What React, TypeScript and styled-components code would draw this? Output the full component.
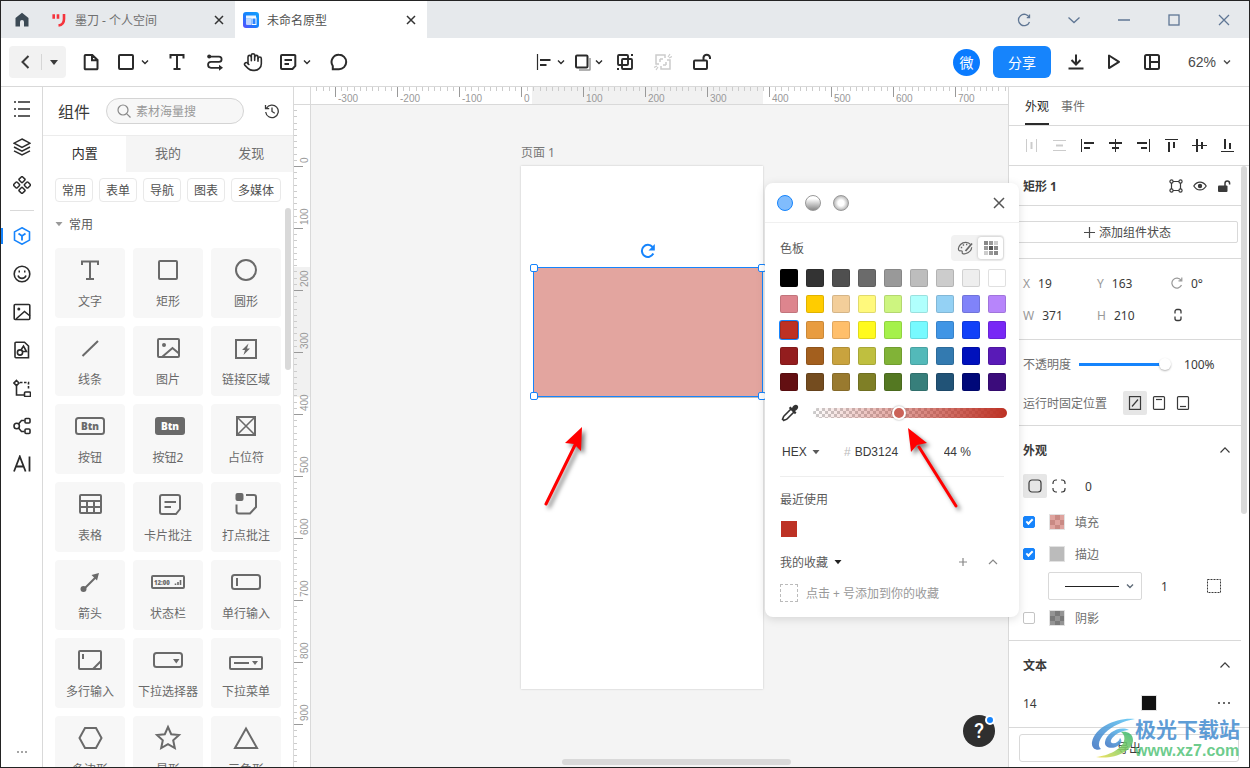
import React from "react";
import styled, { createGlobalStyle, css } from "styled-components";
import { Hand } from "lucide-react";

const blue = "#1684fc";
const line = "#d9d9d9";
const ink = "#3a3a3a";
const muted = "#6e6e6e";

const GlobalStyle = createGlobalStyle`
  *, *::before, *::after { box-sizing: border-box; }
  body { margin: 0; background: #ffffff; }
  body, button, input, select {
    font-family: "Noto Sans", "Noto Sans CJK SC", sans-serif;
    font-size: 12px;
    color: ${ink};
  }
  button, input, select { margin: 0; padding: 0; border: 0; background: none; outline: 0; }
  h1, h2, h3, p { margin: 0; font-size: 12px; font-weight: 400; }
`;

/* ---------- shared parts ---------- */

const Svg = styled.svg<{ $w?: number }>`
  display: block;
  flex: none;
  fill: none;
  stroke: currentColor;
  stroke-width: ${(p) => p.$w ?? 2};
`;

type IconProps = { size?: number; height?: number; w?: number; children: React.ReactNode };
const Icon = ({ size = 18, height, w, children }: IconProps) => (
  <Svg width={size} height={height ?? size} viewBox={`0 0 ${size} ${height ?? size}`} $w={w} aria-hidden="true">
    {children}
  </Svg>
);

const Chevron = () => (
  <Icon size={8} w={1.4}><path d="M1 2.5l3 3 3-3" /></Icon>
);
const ChevronUp = () => (
  <Icon size={12} w={1.2}><path d="M1.5 8.5L6 3.8l4.5 4.7" /></Icon>
);
const CaretDown = () => (
  <Icon size={8} w={0}><path d="M0.500 2h7L4 6.300z" fill="currentColor" /></Icon>
);
const CloseIcon = ({ size = 16, w = 1.5, pad = 4 }: { size?: number; w?: number; pad?: number }) => (
  <Icon size={size} w={w}>
    <path d={`M${pad} ${pad}L${size - pad} ${size - pad}M${size - pad} ${pad}L${pad} ${size - pad}`} />
  </Icon>
);

const Window = styled.div`
  display: flex;
  flex-direction: column;
  height: 100vh;
  border: 1px solid #232323;
  background: #ffffff;
  overflow: hidden;
`;

/* ---------- title bar ---------- */

const TitleBar = styled.header`
  display: flex;
  flex: none;
  height: 37px;
  background: #e6e9ec;
`;
const HomeButton = styled.button`
  display: grid;
  place-items: center;
  width: 42px;
  color: #3c4a55;
`;
const DocTab = styled.div<{ $active?: boolean }>`
  display: flex;
  align-items: center;
  gap: 8px;
  width: 192px;
  padding: 0 8px;
  color: ${(p) => (p.$active ? "#505050" : "#707070")};
  background: ${(p) => (p.$active ? "#ffffff" : "transparent")};
  span { flex: 1; padding-top: 1px; }
  button { color: #333333; }
`;
const WindowControls = styled.div`
  display: flex;
  margin-left: auto;
  button {
    display: grid;
    place-items: center;
    width: 50px;
    color: #5f7694;
  }
`;

/* ---------- toolbar ---------- */

const Toolbar = styled.div`
  display: grid;
  grid-template-columns: 1fr auto 1fr;
  align-items: center;
  flex: none;
  height: 49px;
  border-bottom: 1px solid ${line};
`;
const ToolGroup = styled.div<{ $end?: boolean }>`
  display: flex;
  align-items: center;
  justify-content: ${(p) => (p.$end ? "flex-end" : "flex-start")};
`;
const BackGroup = styled.div`
  display: flex;
  align-items: center;
  height: 32px;
  margin: 0 6px 0 8px;
  border-radius: 4px;
  background: #f2f2f2;
  button { display: grid; place-items: center; height: 16px; }
  button:first-child { width: 33px; border-right: 1px solid #d6d6d6; }
  button:last-child { width: 24px; }
`;
const Tool = styled.button<{ $off?: boolean }>`
  display: grid;
  place-items: center;
  width: 38px;
  height: 32px;
  color: ${(p) => (p.$off ? "#cccccc" : "#2b2b2b")};
`;
const SplitTool = styled.button<{ $tight?: boolean }>`
  display: flex;
  align-items: center;
  gap: ${(p) => (p.$tight ? 3 : 6)}px;
  width: ${(p) => (p.$tight ? 38 : 48)}px;
  height: 32px;
  padding-left: ${(p) => (p.$tight ? 6 : 7)}px;
  color: #2b2b2b;
`;
const Avatar = styled.span`
  display: grid;
  place-items: center;
  width: 27px;
  height: 27px;
  margin-right: 13px;
  border-radius: 50%;
  background: #0a7bff;
  color: #ffffff;
  font-size: 14px;
`;
const ShareButton = styled.button`
  width: 58px;
  height: 32px;
  margin-right: 6px;
  border-radius: 6px;
  background: ${blue};
  color: #ffffff;
  font-size: 14px;
`;
const ZoomButton = styled.button`
  display: flex;
  align-items: center;
  gap: 7px;
  margin: 0 18px 0 17px;
  font-family: "Liberation Sans", sans-serif;
  font-size: 14px;
  color: #4a4a4a;
`;

/* ---------- body ---------- */

const Body = styled.div`
  position: relative;
  display: flex;
  flex: 1;
  min-height: 0;
`;
const Rail = styled.nav`
  display: flex;
  flex-direction: column;
  align-items: center;
  flex: none;
  width: 42px;
  padding: 3px 0;
  border-right: 1px solid ${line};
`;
const RailItem = styled.button<{ $active?: boolean }>`
  display: grid;
  place-items: center;
  flex: none;
  width: 100%;
  height: 38px;
  color: ${(p) => (p.$active ? blue : "#2b2b2b")};
  ${(p) => p.$active && css`
    background: linear-gradient(${blue}, ${blue}) left center / 2px 16px no-repeat;
  `}
`;
const RailRule = styled.hr`
  width: 24px;
  height: 1px;
  flex: none;
  margin: 6px 0;
  border: 0;
  background: ${line};
`;
const RailMore = styled(RailItem)`
  margin-top: auto;
  height: 24px;
  color: #888888;
`;

const Library = styled.aside`
  display: flex;
  flex-direction: column;
  flex: none;
  width: 251px;
  border-right: 1px solid ${line};
`;
const LibraryHead = styled.div`
  display: flex;
  align-items: center;
  height: 49px;
  padding: 0 13px 0 15px;
  border-bottom: 1px solid #ececec;
  h1 { font-size: 16px; flex: none; width: 48px; }
  > button { margin-left: auto; color: ${ink}; }
`;
const SearchBox = styled.label`
  display: flex;
  align-items: center;
  gap: 5px;
  width: 138px;
  height: 26px;
  padding: 0 10px;
  border: 1px solid #d4d4d4;
  border-radius: 13px;
  background: #f7f7f7;
  color: #888888;
  input { width: 100%; min-width: 0; }
  input::placeholder { color: #999999; opacity: 1; }
`;
const LibraryTabs = styled.div`
  display: grid;
  grid-template-columns: repeat(3, 1fr);
  height: 36px;
  flex: none;
`;
const LibraryTab = styled.button<{ $active?: boolean }>`
  padding-bottom: 3px;
  font-size: 13px;
  color: ${(p) => (p.$active ? "#2b2b2b" : muted)};
  background: ${(p) => (p.$active ? "#ffffff" : "#f5f5f5")};
`;
const Chips = styled.div`
  display: flex;
  gap: 6px;
  flex: none;
  padding: 6px 12px 0;
`;
const Chip = styled.button<{ $wide?: boolean }>`
  width: ${(p) => (p.$wide ? 50 : 38)}px;
  height: 24px;
  border: 1px solid #e9e9e9;
  border-radius: 4px;
  color: #505050;
`;
const LibraryScroll = styled.div`
  position: relative;
  flex: 1;
  min-height: 0;
  overflow: hidden;
  padding: 12px 12px 0;
`;
const GroupTitle = styled.button`
  display: flex;
  align-items: center;
  gap: 6px;
  height: 20px;
  color: #5a5a5a;
  svg { color: #999999; }
`;
const CardGrid = styled.div`
  display: grid;
  grid-template-columns: repeat(3, 70px);
  gap: 8px;
  margin-top: 14px;
`;
const Card = styled.button`
  display: flex;
  flex-direction: column;
  align-items: center;
  height: 70px;
  border-radius: 4px;
  background: #f7f7f7;
  color: #6a6a6a;
  white-space: nowrap;
  > svg { margin: 5px 0 6px; }
  span { line-height: 18px; }
`;
const VThumb = styled.i<{ $top: number; $h: number }>`
  position: absolute;
  right: 2px;
  top: ${(p) => p.$top}px;
  width: 6px;
  height: ${(p) => p.$h}px;
  border-radius: 3px;
  background: #d9d9d9;
`;

/* ---------- workspace ---------- */

const Workspace = styled.main`
  position: relative;
  display: grid;
  grid-template: 18px minmax(0, 1fr) / 17px minmax(0, 1fr);
  flex: 1;
  min-width: 0;
  background: #f4f4f4;
`;
const RulerCell = styled.div<{ $side: "corner" | "top" | "left" }>`
  overflow: hidden;
  background: #ffffff;
  border-right: ${(p) => (p.$side === "top" ? 0 : 1)}px solid ${line};
  border-bottom: ${(p) => (p.$side === "left" ? 0 : 1)}px solid ${line};
  svg { display: block; }
  text { font-family: "Liberation Sans", sans-serif; font-size: 10px; fill: #999999; }
`;
const Canvas = styled.div`
  position: relative;
  overflow: hidden;
`;
const PageLabel = styled.span`
  position: absolute;
  left: 210px;
  top: 39px;
  line-height: 18px;
  color: #777777;
`;
const Artboard = styled.div`
  position: absolute;
  left: 210px;
  top: 61px;
  width: 242px;
  height: 523px;
  background: #ffffff;
  box-shadow: 0 0 2px rgba(0, 0, 0, 0.2);
`;
const Shape = styled.div`
  position: absolute;
  left: 12px;
  top: 101px;
  width: 230px;
  height: 130px;
  border: 1px solid ${blue};
  background: #e3a59f;
  box-shadow: 0 1px 0 #bbbbbb;
`;
const Handle = styled.i<{ $x: number; $y: number }>`
  position: absolute;
  left: calc(${(p) => p.$x}% - 4px);
  top: calc(${(p) => p.$y}% - 4px);
  width: 8px;
  height: 8px;
  border: 1px solid ${blue};
  border-radius: 2px;
  background: #ffffff;
`;
const RotateHandle = styled.span`
  position: absolute;
  left: calc(50% - 8px);
  top: -25px;
  color: ${blue};
`;
const HThumb = styled.i`
  position: absolute;
  left: 251px;
  bottom: 2px;
  width: 229px;
  height: 6px;
  border-radius: 3px;
  background: #d9d9d9;
`;
const HelpButton = styled.button`
  position: absolute;
  right: 13px;
  bottom: 20px;
  width: 32px;
  height: 32px;
  border-radius: 50%;
  background: #2f2f2f;
  color: #ffffff;
  font-family: Roboto, sans-serif;
  font-size: 20px;
  font-weight: 500;
  &::after {
    content: "";
    position: absolute;
    right: 0;
    top: 0;
    width: 10px;
    height: 10px;
    border: 2px solid #ffffff;
    border-radius: 50%;
    background: ${blue};
  }
`;

/* ---------- inspector ---------- */

const Inspector = styled.aside`
  position: relative;
  display: flex;
  flex-direction: column;
  flex: none;
  width: 241px;
  border-left: 1px solid ${line};
  background: #ffffff;
`;
const InspectorTabs = styled.div`
  display: flex;
  gap: 12px;
  flex: none;
  height: 39px;
  padding: 0 16px;
  border-bottom: 1px solid ${line};
`;
const InspectorTab = styled.button<{ $active?: boolean }>`
  height: 38px;
  border-top: 1px solid transparent;
  border-bottom: 2px solid ${(p) => (p.$active ? "#2b2b2b" : "transparent")};
  color: ${(p) => (p.$active ? "#2b2b2b" : muted)};
`;
const AlignBar = styled.div`
  display: grid;
  grid-template-columns: repeat(8, 1fr);
  flex: none;
  height: 40px;
  padding: 0 8px;
  border-bottom: 1px solid ${line};
`;
const AlignButton = styled.button<{ $off?: boolean }>`
  display: grid;
  place-items: center;
  color: ${(p) => (p.$off ? "#cccccc" : "#2b2b2b")};
`;
const InspectorScroll = styled.div`
  position: relative;
  flex: 1;
  min-height: 0;
  overflow: hidden;
`;
const Block = styled.section<{ $pad?: string; $last?: boolean }>`
  margin-right: 8px;
  padding: ${(p) => p.$pad ?? "0"};
  border-bottom: ${(p) => (p.$last ? 0 : 1)}px solid ${line};
`;
const Row = styled.div<{ $h: number; $gap?: number }>`
  display: flex;
  align-items: center;
  gap: ${(p) => p.$gap ?? 0}px;
  height: ${(p) => p.$h}px;
  h2 { font-weight: 700; flex: 1; }
  > button { display: grid; place-items: center; }
`;
const HeadRow = styled(Row)`
  padding-right: 10px;
`;
const StateButton = styled.button`
  display: flex;
  align-items: center;
  justify-content: center;
  gap: 4px;
  width: 100%;
  height: 22px;
  border: 1px solid ${line};
  border-radius: 2px;
  color: #4a4a4a;
`;
const FieldGrid = styled.div`
  display: grid;
  grid-template-columns: 74px 74px 1fr;
  grid-auto-rows: 32px;
  align-items: center;
`;
const Field = styled.label`
  display: flex;
  align-items: center;
  gap: 8px;
  color: #999999;
  input { width: 40px; }
`;
const FieldLabel = styled.label`
  flex: none;
  color: ${muted};
`;
const PinLabel = styled.span`
  flex: none;
  margin-right: 16px;
  color: ${muted};
`;
const OpacityRange = styled.input`
  appearance: none;
  width: 92px;
  height: 12px;
  margin: 0 13px 0 8px;
  background: linear-gradient(${blue}, ${blue}) left center / 84px 3px no-repeat;
  &::-webkit-slider-thumb {
    appearance: none;
    width: 12px;
    height: 12px;
    border-radius: 50%;
    background: #ffffff;
    box-shadow: 0 1px 2px rgba(0, 0, 0, 0.3);
  }
`;
const Toggle = styled.button<{ $on?: boolean }>`
  display: grid;
  place-items: center;
  width: 24px;
  height: 24px;
  border-radius: 2px;
  background: ${(p) => (p.$on ? "#e6e6e6" : "transparent")};
`;
const RadiusRow = styled(Row)`
  margin-bottom: 8px;
  input { margin-left: 14px; width: 40px; }
`;
const Check = styled.input`
  appearance: none;
  display: grid;
  place-items: center;
  width: 12px;
  height: 12px;
  border: 1px solid #c4c4c4;
  border-radius: 2px;
  background: #ffffff;
  &:checked { border-color: ${blue}; background: ${blue}; }
  &:checked::after {
    content: "";
    width: 7px;
    height: 4px;
    border: solid #ffffff;
    border-width: 0 0 2px 2px;
    transform: translateY(-1px) rotate(-45deg);
  }
`;
const Swatch = styled.button<{ $a: string; $b: string }>`
  width: 16px;
  height: 16px;
  border: 1px solid #e2e2e2;
  background: conic-gradient(
    ${(p) => p.$a} 25%, ${(p) => p.$b} 0 50%, ${(p) => p.$a} 0 75%, ${(p) => p.$b} 0
  ) 0 0 / 10px 10px;
`;
const CheckRow = styled.div`
  display: flex;
  align-items: center;
  height: 32px;
  color: ${muted};
  input { margin-right: 14px; }
  label { margin-left: 10px; }
`;
const StrokeRow = styled(Row)`
  padding: 0 20px 0 25px;
  > input { width: 30px; margin-left: 19px; }
  > button { margin-left: auto; }
`;
const StrokeSelect = styled.label`
  display: grid;
  grid-template-columns: 16px 54px 1fr;
  align-items: center;
  width: 94px;
  height: 28px;
  border: 1px solid ${line};
  border-radius: 2px;
  select { appearance: none; grid-area: 1 / 1 / 2 / 4; height: 26px; }
  i { grid-area: 1 / 2; height: 1px; background: #222222; pointer-events: none; }
  svg { grid-area: 1 / 3; margin-left: 7px; color: #5f6b78; pointer-events: none; }
`;
const TextRow = styled(Row)`
  > input { width: 118px; }
  > button:last-child { margin-left: auto; }
`;
const ExportBar = styled.div`
  flex: none;
  padding: 6px 10px 5px;
  border-top: 1px solid ${line};
`;
const ExportButton = styled.button`
  width: 100%;
  height: 28px;
  border: 1px solid ${line};
  border-radius: 3px;
`;

const Watermark = styled.div`
  position: absolute;
  right: 9px;
  bottom: 6px;
  display: flex;
  align-items: center;
  pointer-events: none;
  p { font-family: "Liberation Sans", "Noto Sans CJK SC", sans-serif; font-weight: 700; white-space: nowrap; }
  p:first-child { font-size: 21px; line-height: 24px; color: rgba(66, 139, 207, 0.85); }
  p:last-child { font-size: 16px; line-height: 18px; color: rgba(70, 190, 110, 0.8); }
`;

/* ---------- color picker ---------- */

const Picker = styled.section`
  position: absolute;
  z-index: 2;
  top: 96px;
  right: 230px;
  width: 254px;
  border-radius: 8px;
  background: #ffffff;
  box-shadow: 0 2px 10px rgba(0, 0, 0, 0.13);
`;
const PickerHead = styled.div`
  display: flex;
  align-items: center;
  gap: 12px;
  height: 40px;
  padding: 0 12px;
  border-bottom: 1px solid #f0f0f0;
  button:last-child { margin-left: auto; color: #555555; }
`;
const FillKind = styled.button<{ $bg: string; $on?: boolean }>`
  width: 16px;
  height: 16px;
  border: 1px solid ${(p) => (p.$on ? blue : "#999999")};
  border-radius: 50%;
  background: ${(p) => p.$bg};
`;
const PickerBody = styled.div`
  padding: 12px 12px 15px 15px;
`;
const PickerRow = styled.div<{ $h: number; $top?: number }>`
  display: flex;
  align-items: center;
  height: ${(p) => p.$h}px;
  margin-top: ${(p) => p.$top ?? 0}px;
  color: #5a5a5a;
`;
const Segmented = styled.div`
  display: flex;
  gap: 1px;
  height: 26px;
  margin: 0 3px 0 auto;
  padding: 2px 1px;
  border-radius: 4px;
  background: #f2f2f2;
`;
const Segment = styled.button<{ $on?: boolean }>`
  display: grid;
  place-items: center;
  width: 25px;
  height: 22px;
  border-radius: 3px;
  color: #666666;
  ${(p) => p.$on && css`
    background: #ffffff;
    box-shadow: 0 0 3px rgba(0, 0, 0, 0.25);
  `}
`;
const Palette = styled.div`
  display: grid;
  grid-template-columns: repeat(9, 18px);
  gap: 8px;
  margin-top: 8px;
`;
const Tile = styled.button<{ $c: string; $on?: boolean }>`
  height: 18px;
  border: 1px solid rgba(0, 0, 0, 0.12);
  border-radius: 2px;
  background: ${(p) => p.$c};
  ${(p) => p.$on && css`box-shadow: 0 0 0 1px ${blue};`}
`;
const AlphaRow = styled(PickerRow)`
  padding-left: 1px;
`;
const AlphaRange = styled.input`
  appearance: none;
  flex: 1;
  height: 10px;
  margin-left: 14px;
  border-radius: 5px;
  background:
    linear-gradient(90deg, rgba(189, 49, 36, 0), rgb(189, 49, 36)),
    conic-gradient(#cccccc 25%, #ffffff 0 50%, #cccccc 0 75%, #ffffff 0) 0 0 / 6px 6px;
  &::-webkit-slider-thumb {
    appearance: none;
    width: 14px;
    height: 14px;
    border: 2px solid #ffffff;
    border-radius: 50%;
    background: #cb6258;
    box-shadow: 0 0 2px rgba(0, 0, 0, 0.4);
  }
`;
const HexRow = styled(PickerRow)`
  padding-left: 2px;
  select, input, label { font-family: "Liberation Sans", sans-serif; }
  select { appearance: none; width: 30px; }
  label { margin-left: 24px; color: #bbbbbb; }
  input { width: 46px; margin-left: 4px; }
  input:last-child { width: 32px; margin-left: 43px; }
`;
const PickerRule = styled.hr`
  height: 1px;
  margin: 12px 3px 0 0;
  border: 0;
  background: #eeeeee;
`;
const RecentTile = styled.button`
  display: block;
  width: 16px;
  height: 16px;
  margin: 12px 1px 0;
  background: #bd3124;
`;
const EmptySlot = styled.i`
  width: 18px;
  height: 18px;
  margin-right: 8px;
  border: 1px dashed #bbbbbb;
`;
const Hint = styled(PickerRow)`
  color: #999999;
`;
const FavTools = styled.div`
  display: flex;
  gap: 18px;
  margin: 0 8px 0 auto;
  button { color: #888888; }
`;
const FavMenu = styled.button`
  display: flex;
  align-items: center;
  gap: 6px;
  color: #5a5a5a;
  svg { color: #222222; }
`;

const Arrow = styled.svg<{ $x: number; $y: number }>`
  position: absolute;
  z-index: 3;
  left: ${(p) => p.$x}px;
  top: ${(p) => p.$y}px;
  overflow: visible;
  pointer-events: none;
  fill: #ff0000;
  stroke: #ff0000;
  filter: drop-shadow(3px 3px 2px rgba(0, 0, 0, 0.5));
`;

/* ---------- data ---------- */

const palette = [
  "#000000", "#333333", "#4f4f4f", "#6b6b6b", "#999999", "#bdbdbd", "#cccccc", "#eeeeee", "#ffffff",
  "#dd858e", "#ffcc00", "#f3ce9a", "#fff97c", "#cdf580", "#b0fffd", "#94d1f4", "#8083f9", "#b785fb",
  "#bd3124", "#e89c40", "#ffbf6b", "#fffa1e", "#a5f14b", "#77faff", "#4095e5", "#1040f8", "#7828f5",
  "#931d1e", "#a35f1e", "#c9a33e", "#bfbf3f", "#81b337", "#53b9b9", "#337ab0", "#0011bc", "#591ab7",
  "#630f12", "#744c1f", "#997a2f", "#7f7f26", "#547822", "#377f7b", "#215377", "#000879", "#3b0c7b",
];

const solid = { fill: "currentColor", stroke: "none" };

const cards: [string, React.ReactNode][] = [
  ["文字", <><path d="M9 12V8.5h16V12M17 8.5V26M13 26h8" /></>],
  ["矩形", <rect x="8" y="8" width="18" height="18" rx="1" />],
  ["圆形", <circle cx="17" cy="17" r="10" />],
  ["线条", <path d="M9.500 25L25 10" />],
  ["图片", <><rect x="7" y="8" width="21" height="18" rx="1" /><circle cx="13" cy="14" r="2" {...solid} /><path d="M11 26l10.500-9 6.500 5.500" /></>],
  ["链接区域", <><rect x="7" y="9" width="20" height="18" /><path d="M19.500 12.500l-6.500 6.500h3l-1.500 5 6.500-6.500h-3z" {...solid} /></>],
  ["按钮", <><rect x="3" y="9" width="28" height="16" rx="2.500" /><text x="17" y="21" textAnchor="middle" fontFamily="Open Sans" fontSize="10" fontWeight="800" {...solid}>Btn</text></>],
  ["按钮2", <><rect x="4" y="8" width="30" height="18" rx="3" {...solid} /><text x="19" y="21" textAnchor="middle" fontFamily="Open Sans" fontSize="10" fontWeight="800" fill="#fff" stroke="none">Btn</text></>],
  ["占位符", <><rect x="8" y="8" width="18" height="18" /><path d="M8 8l18 18M26 8L8 26" strokeWidth="1.600" /></>],
  ["表格", <><rect x="7" y="8" width="21" height="18" rx="1" /><path d="M7 14h21M7 20h21M14 14v12M21 14v12" /></>],
  ["卡片批注", <><path d="M9 10a2 2 0 0 1 2-2h16a2 2 0 0 1 2 2v12l-4 5H11a2 2 0 0 1-2-2zM13.500 15H25M13.500 20h6.500" /></>],
  ["打点批注", <><path d="M17 8h8a2 2 0 0 1 2 2v10l-6 6.500h-11a2.500 2.500 0 0 1-2.500-2.500v-6.500" /><rect x="6.500" y="6" width="8" height="8" rx="2" {...solid} /></>],
  ["箭头", <><path d="M10 25L23 12" /><circle cx="10.500" cy="24" r="3" {...solid} /><path d="M26 8l-7.500 2 5.500 5.500z" {...solid} /></>],
  ["状态栏", <><rect x="1" y="11" width="32" height="12" rx="1" /><text x="3" y="20" fontFamily="Open Sans" fontSize="6" fontWeight="800" {...solid}>12:00</text><path d="M24.500 20v-1.500M27 20v-3M29.500 20v-5" strokeWidth="1.600" /></>],
  ["单行输入", <><rect x="3" y="10" width="28" height="14" rx="2.500" /><path d="M8 13v8" /></>],
  ["多行输入", <><rect x="6" y="8" width="22" height="18" rx="1" /><path d="M10 11v5M20 26l8-8" /></>],
  ["下拉选择器", <><rect x="3" y="10" width="28" height="14" rx="2.500" /><path d="M22 16h6.500l-3.200 4.500z" {...solid} /></>],
  ["下拉菜单", <><rect x="1" y="14" width="32" height="12" rx="1" /><path d="M5 20h15" /><path d="M23 18h6l-3 4z" {...solid} /></>],
  ["多边形", <path d="M12 7h11l5.500 10L23 27H12L6.500 17z" />],
  ["星形", <path d="M17 6l3.200 7.200 7.800.8-5.800 5.300 1.600 7.700-6.800-3.900L10.200 27l1.600-7.700L6 14l7.800-.8z" />],
  ["三角形", <path d="M17 7.500L28 27H6z" />],
];

const railTop: [string, React.ReactNode][] = [
  ["列表", <path d="M5 2H17M5 9H17M5 16H17M1 2h2M1 9h2M1 16h2" strokeWidth="1.700" />],
  ["图层", <><path d="M9 1l8 4.200L9 9.500 1 5.200z" /><path d="M1 9l8 4.200L17 9M1 12.800L9 17l8-4.200" /></>],
  ["组件", <><rect x="6.600" y="1.200" width="4.800" height="4.800" rx="1" transform="rotate(45 9 3.600)" /><rect x="6.600" y="12" width="4.800" height="4.800" rx="1" transform="rotate(45 9 14.400)" /><rect x="1.200" y="6.600" width="4.800" height="4.800" rx="1" transform="rotate(45 3.600 9)" /><rect x="12" y="6.600" width="4.800" height="4.800" rx="1" transform="rotate(45 14.400 9)" /></>],
];
const railBottom: [string, React.ReactNode][] = [
  ["内置组件", <><path d="M9 .8l7.500 4.100v8.200L9 17.200 1.500 13.100V4.900z" /><path d="M5.500 6.500L9 9l3.500-2.500M9 9v4.500" strokeWidth="1.800" /></>],
  ["图标", <><circle cx="9" cy="9" r="7.800" /><path d="M5 10.500a4.200 4.200 0 0 0 8 0" /><path d="M5.500 6.500h1.500M11 6.500h1.500" strokeWidth="2" /></>],
  ["图片", <><rect x="1.200" y="1.500" width="15.600" height="15" rx="1" /><circle cx="5.800" cy="6" r="1.500" {...solid} /><path d="M3 16l8.500-7.500L17 13" /></>],
  ["素材", <><path d="M3 1.200h8.500L15.500 5v11.800H3a1 1 0 0 1-1-1V2.200a1 1 0 0 1 1-1z" /><circle cx="7" cy="11.500" r="2.600" /><path d="M8 9l2.500-4 3 5.500h-4" /></>],
  ["流程", <><path d="M2.500 1L5 3.500 2.500 6 0 3.500z" transform="translate(1 .5)" /><path d="M3.500 6.500v9.500H11" /><path d="M7 3.500h8.500v7.500" strokeDasharray="2.500 1.500" /><rect x="11.500" y="13" width="6" height="4.500" rx="1" /></>],
  ["关系图", <><circle cx="3.700" cy="9" r="2.700" /><path d="M5.500 7L8.500 3.500h3M5.500 11l3 3.500h3" /><rect x="12" y="1.500" width="5" height="4.500" rx="1" /><rect x="12" y="12" width="5" height="4.500" rx="1" /></>],
  ["AI", <path d="M1 16.500L6.800 1.500 12.600 16.500M3 11.500h7.600M16.500 1.500v15" strokeWidth="1.800" />],
];

const alignIcons: [string, React.ReactNode][] = [
  ["水平等距", <><path d="M2.500 1v13M12.500 1v13" strokeWidth="1" /><path d="M7.500 4v7" /></>],
  ["垂直等距", <><path d="M1 2.500h13M1 12.500h13" strokeWidth="1" /><path d="M4 7.500h7" /></>],
  ["左对齐", <><path d="M1.500 1v13" strokeWidth="1" /><path d="M4 5h10M4 10h6" /></>],
  ["水平居中", <><path d="M7.500 1v13" strokeWidth="1" /><path d="M1 5h13M4 10h7" /></>],
  ["右对齐", <><path d="M13.500 1v13" strokeWidth="1" /><path d="M1 5h10M5 10h6" /></>],
  ["顶对齐", <><path d="M1 1.500h13" strokeWidth="1" /><path d="M5 4v10M10 4v6" /></>],
  ["垂直居中", <><path d="M0 7.500h15" strokeWidth="1" /><path d="M5 1v13M10 4v7" /></>],
  ["底对齐", <><path d="M1 13.500h13" strokeWidth="1" /><path d="M5 1v10M10 5v6" /></>],
];

/* ---------- ruler ---------- */

const SCALE = 62;
const ticks = (zero: number, extent: number) => {
  const first = -Math.floor(((zero - 4) / SCALE) * 10);
  const last = Math.floor(((extent - zero) / SCALE) * 10);
  return Array.from({ length: Math.max(0, last - first + 1) }, (_, k) => first + k).map((i) => ({
    pos: Math.round(zero + (i * SCALE) / 10),
    major: i % 10 === 0,
    value: i * 10,
  }));
};

const useViewport = () => {
  const read = () => ({ width: window.innerWidth, height: window.innerHeight });
  const [viewport, setViewport] = React.useState(read);
  React.useEffect(() => {
    const update = () => setViewport(read());
    window.addEventListener("resize", update);
    return () => window.removeEventListener("resize", update);
  }, []);
  return viewport;
};

const TopRuler = ({ extent }: { extent: number }) => (
  <svg width="100%" height="17">
    <rect x="221" width="231" height="17" fill="#f1f1f1" />
    {ticks(210, extent).map((t) => (
      <React.Fragment key={t.value}>
        <rect x={t.pos} width="1" height={t.major ? 10 : 4} fill={t.major ? "#999" : "#ccc"} />
        {t.major && t.pos + 24 < extent && <text x={t.pos + 3} y="15">{t.value}</text>}
      </React.Fragment>
    ))}
  </svg>
);
const LeftRuler = ({ extent }: { extent: number }) => (
  <svg width="16" height="100%">
    <rect y="162" width="16" height="130" fill="#f1f1f1" />
    {ticks(61, extent).map((t) => (
      <React.Fragment key={t.value}>
        <rect y={t.pos} height="1" width={t.major ? 9 : 3} fill={t.major ? "#999" : "#ccc"} />
        {t.major && <text transform={`translate(14 ${t.pos - 3}) rotate(-90)`}>{t.value}</text>}
      </React.Fragment>
    ))}
  </svg>
);

/* ---------- sections ---------- */

const TopBar = () => (
  <TitleBar>
    <HomeButton aria-label="首页">
      <Icon size={16}><path d="M8 .800L14.500 6v8.500H10V10a2 2 0 0 0-4 0v4.500H1.500V6z" {...solid} /></Icon>
    </HomeButton>
    <DocTab>
      <Icon size={16} w={2.6}>
        <g stroke="#f5343c"><path d="M2.700 2.300v4.500M7 2.300v4.500M13 2v5c0 4-1.500 6-5.500 6.500" /></g>
      </Icon>
      <span>墨刀 - 个人空间</span>
      <button aria-label="关闭"><CloseIcon /></button>
    </DocTab>
    <DocTab $active>
      <Icon size={16}>
        <defs>
          <linearGradient id="doc" x1="0" y1="1" x2="1" y2="0"><stop stopColor="#5a4bff" /><stop offset=".5" stopColor="#1684fc" /><stop offset="1" stopColor="#12a0ff" /></linearGradient>
        </defs>
        <rect width="16" height="16" rx="3" fill="url(#doc)" stroke="none" />
        <path d="M3 3.500h10v3H3z" fill="#fff" fillOpacity=".9" stroke="none" />
        <path d="M3 6.500h5V13H4a1 1 0 0 1-1-1z" fill="#fff" fillOpacity=".7" stroke="none" />
        <rect x="9" y="6" width="4" height="6.500" fill="#2f86ff" stroke="#fff" strokeWidth="1" />
      </Icon>
      <span>未命名原型</span>
      <button aria-label="关闭"><CloseIcon /></button>
    </DocTab>
    <WindowControls>
      <button aria-label="刷新"><Icon size={14} w={1.300}><path d="M12.500 9A5.700 5.700 0 1 1 12.300 4.500M12.500 1.500v3.200H9.800" /></Icon></button>
      <button aria-label="更多"><Icon size={14} w={1.300}><path d="M1.500 4.500L7 9.500l5.500-5" /></Icon></button>
      <button aria-label="最小化"><Icon size={14} w={1.500}><path d="M1 7h12" /></Icon></button>
      <button aria-label="最大化"><Icon size={14} w={1.300}><rect x="2" y="2" width="10" height="10" /></Icon></button>
      <button aria-label="关闭窗口"><CloseIcon size={14} w={1.300} pad={2} /></button>
    </WindowControls>
  </TitleBar>
);

const Tools = () => (
  <Toolbar>
    <ToolGroup>
      <BackGroup>
        <button aria-label="返回"><Icon size={14}><path d="M10.500 1L4.500 7l6 6" /></Icon></button>
        <button aria-label="返回菜单"><Icon size={8} w={0}><path d="M0 2h8L4 7z" fill="currentColor" /></Icon></button>
      </BackGroup>
      <Tool aria-label="页面"><Icon><path d="M3.500 2h6.800L15.500 7v8.500a.8.800 0 0 1-.8.800H3.500a.8.800 0 0 1-.8-.8V2.800a.8.800 0 0 1 .8-.8zM10 2.500V7.300h5" /></Icon></Tool>
      <SplitTool aria-label="形状"><Icon><rect x="2" y="2" width="14" height="14" rx="1" /></Icon><Chevron /></SplitTool>
      <Tool aria-label="文字"><Icon><path d="M2.500 5.500V2h13v3.500M9 2v14M5.500 16h7" /></Icon></Tool>
      <Tool aria-label="连线">
        <Icon><path d="M3 3.700h10a2.600 2.600 0 0 1 0 5.200H5a2.900 2.900 0 0 0 0 5.900h9" strokeWidth="1.800" /><circle cx="3.200" cy="3.500" r="2" {...solid} /><path d="M13 11.800l4 3-4 3z" {...solid} /></Icon>
      </Tool>
      <Tool aria-label="抓手"><Hand size={20} strokeWidth={1.9} /></Tool>
      <SplitTool aria-label="便签"><Icon><path d="M3 2h12.500a.8.800 0 0 1 .8.800v10l-2.800 3.200H3a1 1 0 0 1-1-1V3a1 1 0 0 1 1-1zM5.500 7h7.500M5.500 11h4.500" /></Icon><Chevron /></SplitTool>
      <Tool aria-label="评论"><Icon><path d="M9 1.800a7.200 7.200 0 1 1 0 14.400H2.800V13A7.200 7.200 0 0 1 9 1.800z" /></Icon></Tool>
    </ToolGroup>
    <ToolGroup>
      <SplitTool $tight aria-label="对齐"><Icon><path d="M1.500 1v16" strokeWidth="1.200" /><path d="M4 7h10.500M4 12h6.500" /></Icon><Chevron /></SplitTool>
      <SplitTool $tight aria-label="层级"><Icon><rect x="2" y="2.500" width="11.500" height="12" rx="1" /><path d="M16 5v11.500a.5.500 0 0 1-.5.500H5" stroke="#999" strokeWidth="1.500" /></Icon><Chevron /></SplitTool>
      <Tool aria-label="编组"><Icon><rect x="2" y="2" width="10" height="10" rx="1" strokeWidth="1.900" /><rect x="6" y="6" width="10" height="10" rx="1" strokeWidth="1.900" /><path d="M15 2h2M1 16h2" strokeWidth="2" /></Icon></Tool>
      <Tool $off aria-label="取消编组"><Icon w={1.500}><path d="M11 5V2H2v9h3M13 7h3v9H7v-3M6 6h3M12 12H9M6 6v3M12 12V9" /><path d="M14 4l2-3M15 5l3-1.500M4 14l-2 3M3 13l-3 1.500" strokeWidth="1.200" /></Icon></Tool>
      <Tool aria-label="解锁"><Icon size={20}><rect x="3" y="8.500" width="13" height="8.500" rx="1" /><path d="M12.500 8.500V5.500a3.300 3.300 0 0 1 6.500 0v1.500" /></Icon></Tool>
    </ToolGroup>
    <ToolGroup $end>
      <Avatar>微</Avatar>
      <ShareButton>分享</ShareButton>
      <Tool aria-label="下载"><Icon><path d="M9 1.500v9.500M4.500 7L9 11.500 13.500 7M1.500 15.500h15" /></Icon></Tool>
      <Tool aria-label="运行"><Icon><path d="M4 2.500v12.600L14 8.800z" strokeLinejoin="round" /></Icon></Tool>
      <Tool aria-label="布局"><Icon><rect x="2" y="2" width="14" height="14" rx="1.500" /><path d="M7 2v14M7 9h9" /></Icon></Tool>
      <ZoomButton>62%<Chevron /></ZoomButton>
    </ToolGroup>
  </Toolbar>
);

const SideRail = () => (
  <Rail>
    {railTop.map(([name, art]) => (
      <RailItem key={name} aria-label={name}><Icon w={1.500}>{art}</Icon></RailItem>
    ))}
    <RailRule />
    {railBottom.map(([name, art], i) => (
      <RailItem key={name} aria-label={name} $active={i === 0}><Icon w={1.600}>{art}</Icon></RailItem>
    ))}
    <RailMore aria-label="更多"><Icon size={12}><path d="M1 6h2M5 6h2M9 6h2" strokeWidth="1.500" /></Icon></RailMore>
  </Rail>
);

const ComponentLibrary = () => (
  <Library>
    <LibraryHead>
      <h1>组件</h1>
      <SearchBox>
        <Icon size={14} w={1.200}><circle cx="6" cy="6" r="5" /><path d="M9.800 9.800L13.500 13.500" /></Icon>
        <input type="search" aria-label="搜索素材" placeholder="素材海量搜" />
      </SearchBox>
      <button aria-label="历史"><Icon size={16} w={1.300}><path d="M2.500 5.200A6.300 6.300 0 1 1 1.700 9M1.500 2v3.700h3.700M8 4.500v4l2.800 1.800" /></Icon></button>
    </LibraryHead>
    <LibraryTabs>
      <LibraryTab $active>内置</LibraryTab>
      <LibraryTab>我的</LibraryTab>
      <LibraryTab>发现</LibraryTab>
    </LibraryTabs>
    <Chips>
      {["常用", "表单", "导航", "图表", "多媒体"].map((c) => (
        <Chip key={c} $wide={c.length > 2}>{c}</Chip>
      ))}
    </Chips>
    <LibraryScroll>
      <GroupTitle><CaretDown />常用</GroupTitle>
      <CardGrid>
        {cards.map(([name, art]) => (
          <Card key={name}>
            <Icon size={34}>{art}</Icon>
            <span>{name}</span>
          </Card>
        ))}
      </CardGrid>
      <VThumb $top={6} $h={162} />
    </LibraryScroll>
  </Library>
);

const Stage = () => {
  const { width, height } = useViewport();
  return (
    <Workspace>
      <RulerCell $side="corner" />
      <RulerCell $side="top"><TopRuler extent={width - 553} /></RulerCell>
      <RulerCell $side="left"><LeftRuler extent={height - 106} /></RulerCell>
      <Canvas>
        <PageLabel>页面 1</PageLabel>
        <Artboard>
          <Shape>
            <RotateHandle><Icon size={16}><path d="M13.300 10.500A6 6 0 1 1 12.500 4" /><path d="M14.800 1v6.500H8.500z" {...solid} /></Icon></RotateHandle>
            <Handle $x={0} $y={0} />
            <Handle $x={100} $y={0} />
            <Handle $x={0} $y={100} />
            <Handle $x={100} $y={100} />
          </Shape>
        </Artboard>
        <HThumb />
      </Canvas>
      <HelpButton>?</HelpButton>
    </Workspace>
  );
};

const LockIcon = () => (
  <Icon size={14} w={1.500}><rect x="1" y="6.500" width="9.500" height="6.500" rx="1" {...solid} /><path d="M8 7V4.200a2.300 2.300 0 0 1 4.600 0V5.500" /></Icon>
);

const Properties = () => (
  <Inspector>
    <InspectorTabs>
      <InspectorTab $active>外观</InspectorTab>
      <InspectorTab>事件</InspectorTab>
    </InspectorTabs>
    <AlignBar>
      {alignIcons.map(([name, art], i) => (
        <AlignButton key={name} aria-label={name} $off={i < 2}><Icon size={15}>{art}</Icon></AlignButton>
      ))}
    </AlignBar>
    <InspectorScroll>
      <Block $pad="0 10px 0 14px">
        <Row $h={39} $gap={10}>
          <h2>矩形 1</h2>
          <button aria-label="编辑节点"><Icon size={14} w={1.200}><circle cx="2.500" cy="2.500" r="1.600" /><circle cx="11.500" cy="2.500" r="1.600" /><circle cx="2.500" cy="11.500" r="1.600" /><circle cx="11.500" cy="11.500" r="1.600" /><path d="M4 2.500h6M4 11.500h6M2.500 4v6M11.500 4v6" /></Icon></button>
          <button aria-label="显示"><Icon size={14} w={1.200}><path d="M.8 7C4 1.800 10 1.800 13.200 7 10 12.200 4 12.200.8 7z" /><circle cx="7" cy="7" r="2.200" {...solid} /></Icon></button>
          <button aria-label="锁定"><LockIcon /></button>
        </Row>
      </Block>
      <Block $pad="15px 3px 15px 8px">
        <StateButton><Icon size={11} w={1.200}><path d="M5.500 0v11M0 5.500h11" /></Icon>添加组件状态</StateButton>
      </Block>
      <Block $pad="8px 0 8px 14px">
        <FieldGrid>
          <Field>X<input defaultValue="19" /></Field>
          <Field>Y<input defaultValue="163" /></Field>
          <Field><Icon size={12} w={1.200}><path d="M10.500 8A5 5 0 1 1 10 3.200M10.800.500v3.300H7.500" /></Icon><input aria-label="旋转" defaultValue="0°" /></Field>
          <Field>W<input defaultValue="371" /></Field>
          <Field>H<input defaultValue="210" /></Field>
          <button aria-label="锁定比例"><Icon size={14} w={1.300}><path d="M4 5.500V3.500a2 2 0 0 1 2-2h2a2 2 0 0 1 2 2v2M4 8.500v2a2 2 0 0 0 2 2h2a2 2 0 0 0 2-2v-2" /></Icon></button>
        </FieldGrid>
      </Block>
      <Block $pad="4px 0 4px 14px">
        <Row $h={40}>
          <FieldLabel htmlFor="opacity">不透明度</FieldLabel>
          <OpacityRange id="opacity" type="range" defaultValue={100} />
          <input aria-label="不透明度数值" defaultValue="100%" size={4} />
        </Row>
        <Row $h={37}>
          <PinLabel>运行时固定位置</PinLabel>
          <Toggle $on aria-label="不固定"><Icon size={14} w={1.200}><rect x="1.500" y=".6" width="11" height="12.800" /><path d="M4 10.500l6-7" /></Icon></Toggle>
          <Toggle aria-label="固定顶部"><Icon size={14} w={1.200}><rect x="1.500" y=".6" width="11" height="12.800" rx="1" /><path d="M4 3.500h6" /></Icon></Toggle>
          <Toggle aria-label="固定底部"><Icon size={14} w={1.200}><rect x="1.500" y=".6" width="11" height="12.800" rx="1" /><path d="M4 10.500h6" /></Icon></Toggle>
        </Row>
      </Block>
      <Block $pad="0 0 6px 14px">
        <HeadRow $h={48}>
          <h2>外观</h2>
          <button aria-label="收起"><ChevronUp /></button>
        </HeadRow>
        <RadiusRow $h={24}>
          <Toggle $on aria-label="统一圆角"><Icon size={14} w={1.200}><rect x="1" y="1" width="12" height="12" rx="3" /></Icon></Toggle>
          <Toggle aria-label="独立圆角"><Icon size={14} w={1.200}><path d="M1 5V4a3 3 0 0 1 3-3h1M9 1h1a3 3 0 0 1 3 3v1M13 9v1a3 3 0 0 1-3 3H9M5 13H4a3 3 0 0 1-3-3V9" /></Icon></Toggle>
          <input aria-label="圆角" defaultValue="0" />
        </RadiusRow>
        <CheckRow><Check id="fill" type="checkbox" defaultChecked /><Swatch aria-label="填充颜色" $a="#c98a84" $b="#dfa39e" /><label htmlFor="fill">填充</label></CheckRow>
        <CheckRow><Check id="stroke" type="checkbox" defaultChecked /><Swatch aria-label="描边颜色" $a="#bbbbbb" $b="#bbbbbb" /><label htmlFor="stroke">描边</label></CheckRow>
        <StrokeRow $h={32}>
          <StrokeSelect>
            <select aria-label="描边样式"><option aria-label="实线" /></select>
            <i />
            <Chevron />
          </StrokeSelect>
          <input aria-label="描边宽度" defaultValue="1" />
          <button aria-label="描边位置"><Icon size={14} w={1}><rect x=".5" y=".5" width="13" height="13" strokeDasharray="2 1" /></Icon></button>
        </StrokeRow>
        <CheckRow><Check id="shadow" type="checkbox" /><Swatch aria-label="阴影颜色" $a="#7a7a7a" $b="#949494" /><label htmlFor="shadow">阴影</label></CheckRow>
      </Block>
      <Block $last $pad="0 0 0 14px">
        <HeadRow $h={48}>
          <h2>文本</h2>
          <button aria-label="收起文本"><ChevronUp /></button>
        </HeadRow>
        <TextRow as={HeadRow} $h={28}>
          <FontSize aria-label="字号" defaultValue="14" />
          <Swatch aria-label="文字颜色" $a="#111111" $b="#111111" />
          <MoreButton aria-label="更多文本设置"><Icon size={14}><path d="M1 7h2M6 7h2M11 7h2" strokeWidth="1.600" /></Icon></MoreButton>
        </TextRow>
      </Block>
      <VThumb $top={0} $h={348} />
    </InspectorScroll>
    <ExportBar><ExportButton>导出</ExportButton></ExportBar>
    <Watermark>
      <svg width="44" height="44" viewBox="0 0 44 44" aria-hidden="true">
        <defs>
          <linearGradient id="swb" x1="0" y1="1" x2="1" y2="0"><stop stopColor="#3a6fc0" /><stop offset="1" stopColor="#5cc8f5" /></linearGradient>
          <linearGradient id="swg" x1="0" y1="1" x2="1" y2="0"><stop stopColor="#f2dd45" /><stop offset=".5" stopColor="#86cf62" /><stop offset="1" stopColor="#2fb573" /></linearGradient>
        </defs>
        <g opacity=".85">
          <path d="M44 2C26 0 4 10 1 25c-1 7 5 9 9 7-4-3-2-10 4-16C21 9 32 4 44 2z" fill="url(#swb)" />
          <path d="M38 13c-9-5-23 3-24 12-1 6 8 8 14 3 3-2 3-5 1-7-1 4-5 6-8 5-4-2 4-12 17-13z" fill="url(#swb)" />
          <path d="M30 15c5-1 12 1 12 8C42 34 23 43 5 40c12-1 26-8 28-16 1-4 0-7-3-9z" fill="url(#swg)" />
        </g>
      </svg>
      <div>
        <p>极光下载站</p>
        <p>www.xz7.com</p>
      </div>
    </Watermark>
  </Inspector>
);

const FontSize = styled.input`
  width: 118px;
`;
const MoreButton = styled.button`
  margin-left: auto;
`;

const ColorPicker = () => (
  <Picker aria-label="颜色">
    <PickerHead>
      <FillKind $on $bg="#80bcfd" aria-label="纯色" />
      <FillKind $bg="linear-gradient(#ffffff 20%, #888888)" aria-label="线性渐变" />
      <FillKind $bg="radial-gradient(#ffffff 30%, #888888)" aria-label="径向渐变" />
      <button aria-label="关闭面板"><CloseIcon pad={3} /></button>
    </PickerHead>
    <PickerBody>
      <PickerRow $h={26}>
        <h3>色板</h3>
        <Segmented>
          <Segment aria-label="调色">
            <Icon size={16} w={1.200}><path d="M13.500 4.500C11.500 1.800 6.500 1.500 3.500 4.500.5 7.500 1 11 3.200 10.800c1.500-.2 2.300.4 2 1.700-.3 1.200 1 1.800 3 1.200 3.500-1 6.300-3.500 6.500-6.500" /><path d="M8.500 11L15 3.500" strokeWidth="1.800" /><path d="M3.800 7.500h1.400M5.700 5h1.400M9 4.500h1.300" strokeWidth="1.500" /></Icon>
          </Segment>
          <Segment $on aria-label="色板">
            <Icon size={14} w={0}>
              {[0, 5, 10].map((y, r) => [0, 5, 10].map((x, c) => (
                <rect key={`${x}-${y}`} x={x} y={y} width="4" height="4" fill={["#888", "#999", "#ccc", "#999", "#555", "#888", "#ccc", "#999", "#888"][r * 3 + c]} />
              )))}
            </Icon>
          </Segment>
        </Segmented>
      </PickerRow>
      <Palette>
        {palette.map((c) => (
          <Tile key={c} $c={c} $on={c === "#bd3124"} aria-label={c} />
        ))}
      </Palette>
      <AlphaRow $h={24} $top={10}>
        <Icon size={18} w={1.600}>
          <path d="M10 5L3 12c-1 1-.5 2-1.500 3.200L2.800 16.500C4 15.500 5 16 6 15l7-7" stroke="#333" />
          <path d="M7.800 4L9.500 2.500 11 4C12.500 1 15 0 16.500 1.500S17 5.500 14 7l1.500 1.500L14 10.200z" fill="#333" stroke="none" />
        </Icon>
        <AlphaRange type="range" defaultValue={44} aria-label="透明度" />
      </AlphaRow>
      <HexRow $h={24} $top={15}>
        <select aria-label="颜色格式"><option>HEX</option></select>
        <CaretDown />
        <label htmlFor="hex">#</label>
        <input id="hex" defaultValue="BD3124" />
        <input aria-label="透明度数值" defaultValue="44 %" />
      </HexRow>
      <PickerRule />
      <PickerRow $h={20} $top={12}><h3>最近使用</h3></PickerRow>
      <RecentTile aria-label="#BD3124" />
      <PickerRow $h={20} $top={15}>
        <FavMenu>我的收藏<CaretDown /></FavMenu>
        <FavTools>
          <button aria-label="添加收藏"><Icon size={12} w={1.200}><path d="M6 2v8M2 6h8" /></Icon></button>
          <button aria-label="收起收藏"><Icon size={12} w={1.200}><path d="M2 8l4-4 4 4" /></Icon></button>
        </FavTools>
      </PickerRow>
      <Hint $h={18} $top={12}><EmptySlot />点击 + 号添加到你的收藏</Hint>
    </PickerBody>
  </Picker>
);

export default function App() {
  return (
    <>
      <GlobalStyle />
      <Window>
        <TopBar />
        <Tools />
        <Body>
          <SideRail />
          <ComponentLibrary />
          <Stage />
          <Properties />
          <ColorPicker />
          <Arrow $x={544} $y={340} width="40" height="80" aria-hidden="true">
            <path d="M1 77L30 18" strokeWidth="3" strokeLinecap="round" />
            <path d="M37 0L20 16l9 1 7 7z" stroke="none" />
          </Arrow>
          <Arrow $x={907} $y={341} width="50" height="80" aria-hidden="true">
            <path d="M48 78L11 19" strokeWidth="3" strokeLinecap="round" />
            <path d="M0 0l3 24 6-7 10-2z" stroke="none" />
          </Arrow>
        </Body>
      </Window>
    </>
  );
}
